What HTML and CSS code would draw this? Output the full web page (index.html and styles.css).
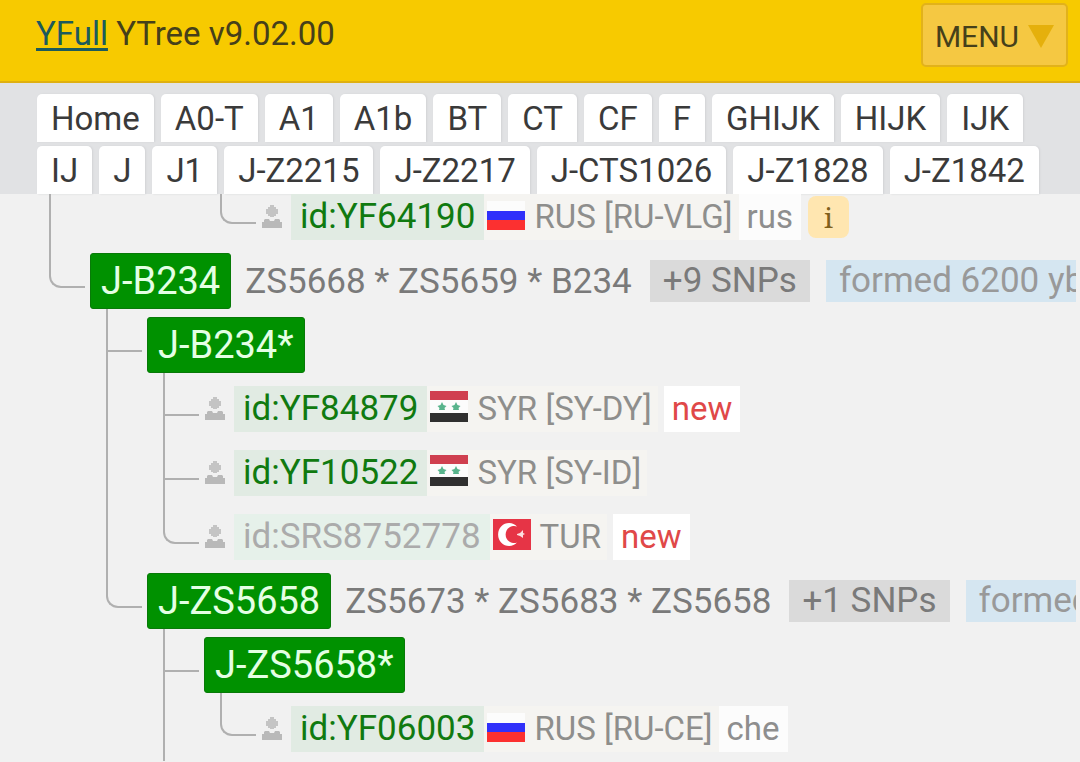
FILE: index.html
```html
<!DOCTYPE html>
<html lang="en">
<head>
<meta charset="utf-8">
<meta name="viewport" content="width=device-width, initial-scale=1">
<title>YFull YTree v9.02.00</title>
<link rel="stylesheet" href="styles.css">
</head>
<body>
<svg class="defs" width="0" height="0" aria-hidden="true">
  <symbol id="person" viewBox="0 0 22 24">
    <path fill="#c4c4c4" d="M9 0h4v2h2v2h2v5h-2v2h-2v1H9v-1H7V9H5V4h2V2h2z"/>
    <path fill="#b9b9b9" d="M3 15l1-1h4l1 2h4l1-2h4l1 1v2h2v6H1v-6h2z"/>
  </symbol>
  <symbol id="flag-ru" viewBox="0 0 38 32">
    <path fill="#fcfcfc" d="M0 2h38v10H0z"/>
    <path fill="#3030fa" d="M0 12h38v9H0z"/>
    <path fill="#fc3030" d="M0 21h38v10H0z"/>
  </symbol>
  <symbol id="flag-sy" viewBox="0 0 38 32">
    <path fill="#d04050" d="M0 0h38v9H0z"/>
    <path fill="#fcfcfc" d="M0 9h38v13H0z"/>
    <path fill="#303030" d="M0 22h38v9H0z"/>
    <path fill="#58b48c" d="M12 11l1.500 3 3 1-2 2 .5 2-3 0-3 0 .5-2-2-2 3-1zM26 11l1.500 3 3 1-2 2 .5 2-3 0-3 0 .5-2-2-2 3-1z"/>
  </symbol>
  <symbol id="flag-tr" viewBox="0 0 38 32">
    <path fill="#e63446" d="M0 0h38v31H0z"/>
    <path fill="#fff" d="M24 7.500A11 11.500 0 1 0 24 23.500A8.500 8.500 0 1 1 24 7.500z"/>
    <path fill="#fbdfe1" d="M24 15l3-1 3-3v3l2 1-2 1v3l-3-2-3-1z"/>
  </symbol>
</svg>

<header class="header">
  <h1 class="title"><a class="title-link" href="#">YFull</a> YTree v9.02.00</h1>
  <button class="menu" type="button">MENU
    <svg class="menu-arrow" viewBox="0 0 26 23" aria-hidden="true"><path d="M0 0h26L13 23z"/></svg>
  </button>
</header>

<nav class="crumbs" aria-label="Path">
  <a class="crumb" href="#">Home</a>
  <a class="crumb" href="#">A0-T</a>
  <a class="crumb" href="#">A1</a>
  <a class="crumb" href="#">A1b</a>
  <a class="crumb" href="#">BT</a>
  <a class="crumb" href="#">CT</a>
  <a class="crumb" href="#">CF</a>
  <a class="crumb" href="#">F</a>
  <a class="crumb" href="#">GHIJK</a>
  <a class="crumb" href="#">HIJK</a>
  <a class="crumb" href="#">IJK</a>
  <a class="crumb" href="#">IJ</a>
  <a class="crumb" href="#">J</a>
  <a class="crumb" href="#">J1</a>
  <a class="crumb" href="#">J-Z2215</a>
  <a class="crumb" href="#">J-Z2217</a>
  <a class="crumb" href="#">J-CTS1026</a>
  <a class="crumb" href="#">J-Z1828</a>
  <a class="crumb" href="#">J-Z1842</a>
</nav>

<main class="viewport">
  <ul class="tree">
    <li class="row">
      <span class="rail pass"></span><span class="rail"></span><span class="rail"></span><span class="rail elbow"></span>
      <svg class="person" aria-hidden="true"><use href="#person"/></svg>
      <span class="sample">id:YF64190</span>
      <span class="country"><svg class="flag" aria-hidden="true"><use href="#flag-ru"/></svg>RUS [RU-VLG]</span>
      <span class="lang">rus</span>
      <button class="info" type="button">i</button>
    </li>
    <li class="row">
      <span class="rail elbow"></span>
      <a class="clade" href="#">J-B234</a>
      <span class="snps">ZS5668 * ZS5659 * B234</span>
      <button class="more" type="button">+9 SNPs</button>
      <span class="age">formed 6200 ybp</span>
    </li>
    <li class="row">
      <span class="rail"></span><span class="rail tee"></span>
      <a class="clade" href="#">J-B234*</a>
    </li>
    <li class="row">
      <span class="rail"></span><span class="rail pass"></span><span class="rail tee"></span>
      <svg class="person" aria-hidden="true"><use href="#person"/></svg>
      <span class="sample">id:YF84879</span>
      <span class="country"><svg class="flag" aria-hidden="true"><use href="#flag-sy"/></svg>SYR [SY-DY]</span>
      <span class="new">new</span>
    </li>
    <li class="row">
      <span class="rail"></span><span class="rail pass"></span><span class="rail tee"></span>
      <svg class="person" aria-hidden="true"><use href="#person"/></svg>
      <span class="sample">id:YF10522</span>
      <span class="country"><svg class="flag" aria-hidden="true"><use href="#flag-sy"/></svg>SYR [SY-ID]</span>
    </li>
    <li class="row">
      <span class="rail"></span><span class="rail pass"></span><span class="rail elbow"></span>
      <svg class="person" aria-hidden="true"><use href="#person"/></svg>
      <span class="sample external">id:SRS8752778</span>
      <span class="country"><svg class="flag" aria-hidden="true"><use href="#flag-tr"/></svg>TUR</span>
      <span class="new">new</span>
    </li>
    <li class="row">
      <span class="rail"></span><span class="rail elbow"></span>
      <a class="clade" href="#">J-ZS5658</a>
      <span class="snps">ZS5673 * ZS5683 * ZS5658</span>
      <button class="more" type="button">+1 SNPs</button>
      <span class="age">formed</span>
    </li>
    <li class="row">
      <span class="rail"></span><span class="rail"></span><span class="rail tee"></span>
      <a class="clade" href="#">J-ZS5658*</a>
    </li>
    <li class="row">
      <span class="rail"></span><span class="rail"></span><span class="rail pass"></span><span class="rail elbow"></span>
      <svg class="person" aria-hidden="true"><use href="#person"/></svg>
      <span class="sample">id:YF06003</span>
      <span class="country"><svg class="flag" aria-hidden="true"><use href="#flag-ru"/></svg>RUS [RU-CE]</span>
      <span class="lang">che</span>
    </li>
  </ul>
</main>
</body>
</html>
```
FILE: styles.css
```css
* {
  box-sizing: border-box;
}

body {
  margin: 0;
  min-height: 100vh;
  overflow: hidden;
  background: #f1f1f1;
  font-family: Roboto, "Liberation Sans", sans-serif;
  color: #333;
}

button {
  font-family: inherit;
  margin: 0;
}

.defs {
  display: block;
}

.header {
  display: flex;
  align-items: flex-start;
  justify-content: space-between;
  height: 83px;
  padding: 3px 12px 0 36px;
  background: #f7ca00;
  border-bottom: 2px solid #dfb010;
}

.title {
  margin: 11px 0 0;
  font-size: 33px;
  line-height: 40px;
  font-weight: 400;
  color: #46401a;
}

.title-link {
  color: #1c5a5c;
  text-decoration-thickness: 3px;
  text-underline-offset: 3px;
}

.menu {
  display: flex;
  align-items: center;
  gap: 9px;
  height: 64px;
  padding: 2px 12px 0;
  border: 2px solid #e2b21a;
  border-radius: 5px;
  background: #f5c842;
  color: #46401a;
  font-size: 30px;
}

.menu-arrow {
  width: 26px;
  height: 23px;
  fill: #e5b00c;
}

.crumbs {
  display: flex;
  flex-wrap: wrap;
  gap: 4px 7px;
  padding: 11px 37px 0;
  background: #e1e2e4;
}

.crumb {
  height: 48px;
  padding: 0 14px;
  border-radius: 5px 5px 0 0;
  background: #fff;
  box-shadow: 1px 0 2px #d2d3d6;
  color: #3a3a3a;
  font-size: 33px;
  line-height: 49px;
  text-decoration: none;
}

.viewport {
  overflow: hidden;
  margin-right: 4px;
}

/* The list is scrolled slightly, so its first row is cut by the path bar. */
.tree {
  margin: -9px 0 0;
  padding: 0 0 0 49px;
  list-style: none;
}

.row {
  display: flex;
  align-items: center;
  height: 64px;
  white-space: nowrap;
}

.rail {
  flex: none;
  align-self: stretch;
  display: flex;
  flex-direction: column;
  width: 57px;
}

.pass {
  border-left: 2px solid #b0b0b0;
}

.tee,
.elbow {
  width: 41px;
}

.tee::before,
.elbow::before {
  content: "";
  flex: none;
  width: 34px;
  height: 45px;
  margin-top: -8px;
  border: solid #b0b0b0;
  border-width: 0 0 2px 2px;
}

.elbow::before {
  border-bottom-left-radius: 12px;
}

.tee::after {
  content: "";
  flex: 1;
  border-left: 2px solid #b0b0b0;
}

.person {
  flex: none;
  width: 22px;
  height: 24px;
}

.sample {
  height: 46px;
  margin-left: 8px;
  padding: 0 9px;
  background: #e1ebe3;
  color: #107a10;
  font-size: 35px;
  line-height: 46px;
}

.external {
  background: #e6f1ea;
  color: #ababab;
}

.country {
  display: flex;
  align-items: center;
  gap: 9px;
  height: 46px;
  padding: 0 6px 0 3px;
  background: #f5f4f1;
  color: #8e8e8c;
  font-size: 33px;
  line-height: 46px;
}

.flag {
  flex: none;
  width: 38px;
  height: 32px;
  margin-bottom: 4px;
}

.lang {
  height: 46px;
  padding: 0 8px;
  background: #fcfcfc;
  color: #8e8e8e;
  font-size: 33px;
  line-height: 46px;
}

.info {
  width: 41px;
  height: 42px;
  margin-left: 7px;
  padding: 0;
  border: 0;
  border-radius: 8px;
  background: #ffe6b0;
  color: #80601c;
  font-family: "Noto Serif", "DejaVu Serif", serif;
  font-size: 28px;
}

.new {
  height: 46px;
  margin-left: 6px;
  padding: 0 8px;
  background: #fff;
  color: #e04848;
  font-size: 33px;
  line-height: 46px;
}

.clade {
  position: relative;
  height: 56px;
  padding: 0 10px;
  border: 1px solid #087a08;
  border-radius: 3px;
  background: #009100;
  color: #e4ffe4;
  font-size: 38px;
  line-height: 54px;
  text-decoration: none;
}

.snps {
  margin-left: 14px;
  color: #7a7a7a;
  font-size: 35px;
}

.more {
  height: 42px;
  margin-left: 18px;
  padding: 0 13px;
  border: 0;
  background: #dadada;
  color: #7a7a7a;
  font-size: 35px;
  line-height: 42px;
}

.age {
  height: 42px;
  margin-left: 16px;
  padding: 0 13px;
  background: #d5e6f1;
  color: #999;
  font-size: 35px;
  line-height: 42px;
}
```
